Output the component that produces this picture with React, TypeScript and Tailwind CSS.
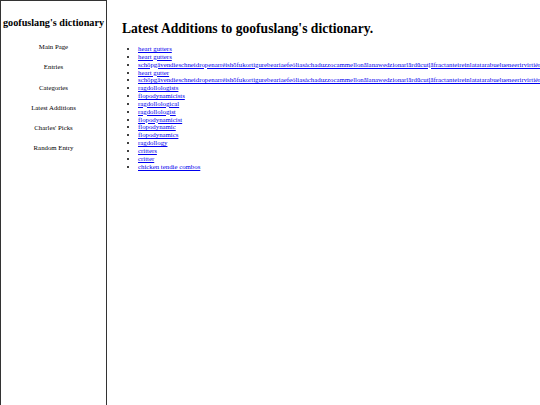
const navLinks = [
  "Main Page",
  "Entries",
  "Categories",
  "Latest Additions",
  "Charles' Picks",
  "Random Entry",
];

const longWord =
  "schöpgävendieschneidropenarréishōfukortigurebeariaefeóliasàchaduzzocammellonālanawedzionarlārdūcutļāfractanteireinlatatarabuelueneerirvirtiéra";

const latest = [
  "heart gutters",
  "heart gutters",
  longWord,
  "heart gutter",
  longWord,
  "ragdollologists",
  "flopodynamicists",
  "ragdollological",
  "ragdollologist",
  "flopodynamicist",
  "flopodynamic",
  "flopodynamics",
  "ragdollogy",
  "critters",
  "critter",
  "chicken tendie combos",
];

export default function App() {
  return (
    <div className="flex h-screen w-full overflow-hidden bg-white font-['Liberation_Serif',serif] text-black">
      <aside className="h-[420px] w-[107px] shrink-0 border-l border-t border-r border-[#333]">
        <h2 className="mt-[16px] text-center text-[10.2px] font-bold leading-[12px]">
          goofuslang's dictionary
        </h2>
        <nav className="mt-[14px] flex flex-col items-center gap-[12.3px]">
          {navLinks.map((l) => (
            <a key={l} className="text-[6.8px] leading-[8px]">
              {l}
            </a>
          ))}
        </nav>
      </aside>
      <main className="min-w-0 flex-1 pl-[15px]">
        <h1 className="mt-[21px] whitespace-nowrap text-[13.6px] font-bold leading-[16px]">
          Latest Additions to goofuslang's dictionary.
        </h1>
        <ul className="mt-[8px] list-disc pl-[8px] text-[6.8px] leading-[7.85px]">
          {latest.map((w, i) => (
            <li key={i} className="ml-[8px] whitespace-nowrap">
              <a href="#" className="text-[#0000ee] underline">
                {w}
              </a>
            </li>
          ))}
        </ul>
      </main>
    </div>
  );
}
